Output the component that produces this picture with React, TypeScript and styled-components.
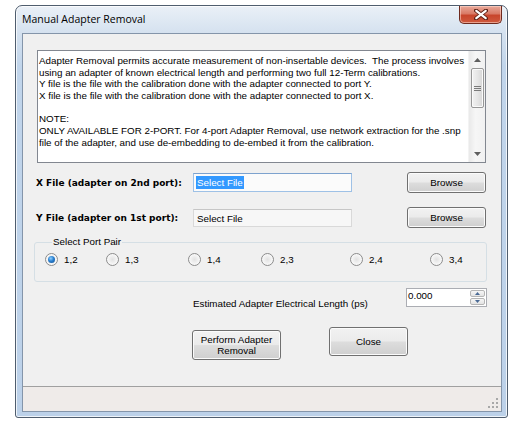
import * as React from "react";
import styled, { createGlobalStyle } from "styled-components";

const GlobalStyle = createGlobalStyle`
  html, body {
    margin: 0;
    padding: 0;
    background: #ffffff;
  }
  body {
    font-family: "Liberation Sans", Arial, sans-serif;
    font-size: 9.8px;
    color: #000;
  }
`;

const Page = styled.div`
  padding: 5px 0 0 15px;
`;

const Window = styled.div`
  width: 493px;
  height: 413px;
  box-sizing: border-box;
  border: 1px solid #4f5d6e;
  border-radius: 7px 7px 3px 3px;
  background: linear-gradient(to bottom, #eaf0f7 0px, #d4e1ef 28px, #c1d5eb 60px, #bcd1e9 100%);
  box-shadow: inset 0 0 0 1px rgba(255, 255, 255, 0.75);
  display: flex;
  flex-direction: column;
  padding: 0 5px 5px 6px;
`;

const TitleBar = styled.div`
  height: 27px;
  display: flex;
  align-items: flex-start;
`;

const Title = styled.span`
  font-family: "Open Sans", "Noto Sans", sans-serif;
  font-size: 10.5px;
  line-height: 14px;
  padding-top: 6px;
  color: #000;
`;

const CloseButton = styled.div`
  margin-left: auto;
  width: 43px;
  height: 18px;
  box-sizing: border-box;
  border: 1px solid #6e2a1e;
  border-top: none;
  border-radius: 0 0 5px 5px;
  background: linear-gradient(to bottom, #e9a99a 0%, #d97a66 45%, #c8452c 55%, #cf5a3e 100%);
  box-shadow: inset 0 0 0 1px rgba(255, 220, 210, 0.55);
  display: flex;
  align-items: center;
  justify-content: center;
`;

const Client = styled.div`
  flex: 1;
  border: 1px solid #8495aa;
  background: #f0f0f0;
  display: flex;
  flex-direction: column;
`;

const InfoBox = styled.div`
  margin: 16px 0 0 14px;
  width: 449px;
  height: 113px;
  box-sizing: border-box;
  border: 1px solid #828790;
  background: #ffffff;
  display: flex;
`;

const InfoText = styled.div`
  flex: 1;
  padding: 4px 0 0 1px;
  white-space: pre;
  line-height: 11.67px;
  font-size: 9.8px;
`;

const ScrollBar = styled.div`
  width: 16px;
  display: flex;
  flex-direction: column;
  background: linear-gradient(to right, #e9e9e9, #f6f6f6 40%, #f1f1f1);
  border-left: 1px solid #f3f3f3;
`;

const ScrollArrow = styled.div`
  height: 17px;
  display: flex;
  align-items: center;
  justify-content: center;
`;

const ScrollTrack = styled.div`
  flex: 1;
  display: flex;
  flex-direction: column;
  align-items: center;
`;

const ScrollThumb = styled.div`
  width: 13px;
  height: 40px;
  box-sizing: border-box;
  border: 1px solid #979797;
  border-radius: 2px;
  background: linear-gradient(to right, #f2f2f2, #e6e6e6 50%, #d6d6d6);
  box-shadow: inset 0 0 0 1px #fafafa;
  display: flex;
  align-items: center;
  justify-content: center;
`;

const FileRow = styled.div<{ $top: number }>`
  margin-top: ${(p) => p.$top}px;
  padding: 0 15px 0 13px;
  display: flex;
  align-items: center;
  height: 21px;
`;

const FileLabel = styled.span`
  width: 157px;
  font-family: "DejaVu Sans", Tahoma, sans-serif;
  font-weight: bold;
  font-size: 9px;
`;

const FileInput = styled.div<{ $focused?: boolean }>`
  width: 159px;
  height: ${(p) => (p.$focused ? 19 : 18)}px;
  box-sizing: border-box;
  border: 1px solid ${(p) => (p.$focused ? "#9ec1e6" : "#d9d9d9")};
  border-top-color: ${(p) => (p.$focused ? "#7da2ce" : "#c6c6c6")};
  background: ${(p) => (p.$focused ? "#fbfbfb" : "#f7f7f7")};
  display: flex;
  align-items: center;
  padding-left: 2px;
  margin-top: ${(p) => (p.$focused ? 0 : 1)}px;
`;

const Selected = styled.span`
  background: #3399ff;
  color: #fff;
  padding: 1px 1px;
`;

const PlainValue = styled.span`
  padding: 0 1px;
`;

const Button = styled.div<{ $w: number; $h: number }>`
  width: ${(p) => p.$w}px;
  height: ${(p) => p.$h}px;
  box-sizing: border-box;
  border: 1px solid #707070;
  border-radius: 3px;
  background: linear-gradient(to bottom, #f2f2f2 0%, #ebebeb 48%, #dddddd 52%, #cfcfcf 100%);
  box-shadow: inset 0 0 0 1px #fbfbfb;
  display: flex;
  align-items: center;
  justify-content: center;
  text-align: center;
  line-height: 11.5px;
`;

const PushRight = styled.div`
  margin-left: auto;
`;

const Group = styled.fieldset`
  margin: 8px 14px 0 11px;
  padding: 5px 0 15px 10px;
  border: 1px solid #d5dfe5;
  border-radius: 3px;
  min-inline-size: 0;
  display: flex;
`;

const GroupCaption = styled.legend`
  padding: 0 1px;
  margin-left: 7px;
  line-height: 12px;
`;

const RadioItem = styled.label<{ $w?: number }>`
  width: ${(p) => (p.$w ? `${p.$w}px` : "auto")};
  display: flex;
  align-items: center;
  gap: 6px;
  height: 13px;
`;

const RadioDot = styled.span<{ $on?: boolean }>`
  width: 13px;
  height: 13px;
  box-sizing: border-box;
  border-radius: 50%;
  border: 1px solid #8c8c8c;
  background: radial-gradient(circle at 50% 50%, #e2e2e2 0%, #f4f4f4 55%, #ffffff 100%);
  display: flex;
  align-items: center;
  justify-content: center;

  &::after {
    content: "";
    display: ${(p) => (p.$on ? "block" : "none")};
    width: 7px;
    height: 7px;
    border-radius: 50%;
    background: radial-gradient(circle at 40% 35%, #8ed0ff 0%, #2a7fcf 45%, #134f8f 100%);
  }
`;

const LengthRow = styled.div`
  margin-top: 6px;
  padding: 0 14px 0 170px;
  display: flex;
  align-items: flex-start;
`;

const LengthLabel = styled.span`
  padding-top: 10px;
`;

const Spinner = styled.div`
  margin-left: auto;
  width: 81px;
  height: 19px;
  box-sizing: border-box;
  border: 1px solid #abadb3;
  background: #ffffff;
  display: flex;
`;

const SpinValue = styled.span`
  flex: 1;
  padding: 1px 0 0 1px;
`;

const SpinButtons = styled.div`
  width: 15px;
  display: flex;
  flex-direction: column;
  gap: 1px;
  padding: 1px 1px 1px 0;
`;

const SpinButton = styled.div`
  flex: 1;
  border: 1px solid #b5b5b5;
  border-radius: 2px;
  background: linear-gradient(to bottom, #f6f6f6, #e3e3e3);
  display: flex;
  align-items: center;
  justify-content: center;
`;

const ActionRow = styled.div`
  margin-top: 18px;
  padding-left: 169px;
  display: flex;
  align-items: flex-start;
  gap: 48px;
`;

const ShiftDown = styled.div<{ $by: number }>`
  margin-top: ${(p) => p.$by}px;
`;

const Spacer = styled.div`
  flex: 1;
`;

const StatusBar = styled.div`
  height: 21px;
  border-top: 1px solid #a0a0a0;
  background: #efebe9;
  display: flex;
  justify-content: flex-end;
  align-items: flex-end;
  padding: 0 3px 3px 0;
`;

const infoLines = [
  "Adapter Removal permits accurate measurement of non-insertable devices.  The process involves",
  "using an adapter of known electrical length and performing two full 12-Term calibrations.",
  "Y file is the file with the calibration done with the adapter connected to port Y.",
  "X file is the file with the calibration done with the adapter connected to port X.",
  "",
  "NOTE:",
  "ONLY AVAILABLE FOR 2-PORT. For 4-port Adapter Removal, use network extraction for the .snp",
  "file of the adapter, and use de-embedding to de-embed it from the calibration.",
].join("\n");

const ports = [
  { label: "1,2", w: 61, on: true },
  { label: "1,3", w: 82 },
  { label: "1,4", w: 73 },
  { label: "2,3", w: 89 },
  { label: "2,4", w: 80 },
  { label: "3,4" },
];

const Arrow = ({ up }: { up?: boolean }) => (
  <svg width="7" height="4" viewBox="0 0 7 4">
    <path d={up ? "M0 4 L3.5 0 L7 4 Z" : "M0 0 L3.5 4 L7 0 Z"} fill="#5f5f5f" />
  </svg>
);

const SmallArrow = ({ up }: { up?: boolean }) => (
  <svg width="5" height="3" viewBox="0 0 5 3">
    <path d={up ? "M0 3 L2.5 0 L5 3 Z" : "M0 0 L2.5 3 L5 0 Z"} fill="#4a6a95" />
  </svg>
);

const App: React.FunctionComponent<{}> = () => {
  return (
    <Page>
      <GlobalStyle />
      <Window>
        <TitleBar>
          <Title>Manual Adapter Removal</Title>
          <CloseButton>
            <svg width="14" height="11" viewBox="0 0 14 11">
              <path
                d="M2 1.5 L12 9.5 M12 1.5 L2 9.5"
                stroke="#5a1f14"
                strokeWidth="4"
                strokeLinecap="round"
              />
              <path
                d="M2.3 1.8 L11.7 9.2 M11.7 1.8 L2.3 9.2"
                stroke="#ffffff"
                strokeWidth="2.2"
                strokeLinecap="round"
              />
            </svg>
          </CloseButton>
        </TitleBar>
        <Client>
          <InfoBox>
            <InfoText>{infoLines}</InfoText>
            <ScrollBar>
              <ScrollArrow>
                <Arrow up />
              </ScrollArrow>
              <ScrollTrack>
                <ScrollThumb>
                  <svg width="7" height="7" viewBox="0 0 7 7">
                    <path d="M0 1.5 H7 M0 3.5 H7 M0 5.5 H7" stroke="#7a7a7a" strokeWidth="1" />
                  </svg>
                </ScrollThumb>
              </ScrollTrack>
              <ScrollArrow>
                <Arrow />
              </ScrollArrow>
            </ScrollBar>
          </InfoBox>

          <FileRow $top={9}>
            <FileLabel>X File (adapter on 2nd port):</FileLabel>
            <FileInput $focused>
              <Selected>Select File</Selected>
            </FileInput>
            <PushRight>
              <Button $w={79} $h={21}>Browse</Button>
            </PushRight>
          </FileRow>

          <FileRow $top={14}>
            <FileLabel>Y File (adapter on 1st port):</FileLabel>
            <FileInput>
              <PlainValue>Select File</PlainValue>
            </FileInput>
            <PushRight>
              <Button $w={79} $h={21}>Browse</Button>
            </PushRight>
          </FileRow>

          <Group>
            <GroupCaption>Select Port Pair</GroupCaption>
            {ports.map((p) => (
              <RadioItem key={p.label} $w={p.w}>
                <RadioDot $on={p.on} />
                {p.label}
              </RadioItem>
            ))}
          </Group>

          <LengthRow>
            <LengthLabel>Estimated Adapter Electrical Length (ps)</LengthLabel>
            <Spinner>
              <SpinValue>0.000</SpinValue>
              <SpinButtons>
                <SpinButton>
                  <SmallArrow up />
                </SpinButton>
                <SpinButton>
                  <SmallArrow />
                </SpinButton>
              </SpinButtons>
            </Spinner>
          </LengthRow>

          <ActionRow>
            <ShiftDown $by={3}>
              <Button $w={89} $h={30}>
                Perform Adapter
                <br />
                Removal
              </Button>
            </ShiftDown>
            <Button $w={79} $h={29}>Close</Button>
          </ActionRow>

          <Spacer />
          <StatusBar>
            <svg width="10" height="10" viewBox="0 0 10 10">
              <g fill="#a8a8a8">
                <rect x="8" y="0" width="2" height="2" />
                <rect x="4" y="4" width="2" height="2" />
                <rect x="8" y="4" width="2" height="2" />
                <rect x="0" y="8" width="2" height="2" />
                <rect x="4" y="8" width="2" height="2" />
                <rect x="8" y="8" width="2" height="2" />
              </g>
            </svg>
          </StatusBar>
        </Client>
      </Window>
    </Page>
  );
};

export default App;
